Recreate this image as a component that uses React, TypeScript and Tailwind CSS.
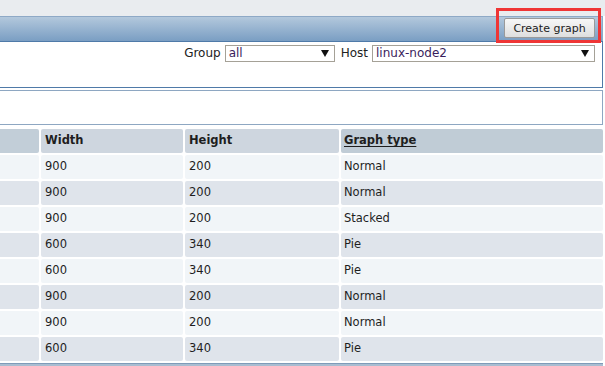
const rows = [
  { width: "900", height: "200", type: "Normal" },
  { width: "900", height: "200", type: "Normal" },
  { width: "900", height: "200", type: "Stacked" },
  { width: "600", height: "340", type: "Pie" },
  { width: "600", height: "340", type: "Pie" },
  { width: "900", height: "200", type: "Normal" },
  { width: "900", height: "200", type: "Normal" },
  { width: "600", height: "340", type: "Pie" },
];

function Select({ value, className }: { value: string; className: string }) {
  return (
    <div
      className={`h-[17px] border border-[#a5a197] bg-white flex items-center justify-between pl-[3px] pr-[5px] ${className}`}
    >
      <span className="text-[#3a1d5c] leading-none">{value}</span>
      <svg width="8" height="7" viewBox="0 0 8 7">
        <path d="M0 0h8L4 7z" fill="#111" />
      </svg>
    </div>
  );
}

export default function App() {
  return (
    <div
      className="w-[605px] h-[366px] bg-white overflow-hidden relative text-[11px] text-[#222]"
      style={{ fontFamily: '"DejaVu Sans", Verdana, sans-serif' }}
    >
      {/* top strip */}
      <div className="h-[16px] bg-[#e9ecef]" />

      {/* header bar */}
      <div className="h-[25px] mr-[2px] border-t border-r border-[#8ea9c6] bg-gradient-to-b from-[#b3c8dc] to-[#7a9ec3] flex items-start justify-end pr-[7px] pt-[1px]">
        <button className="h-[20px] w-[91px] rounded-[2px] border border-[#9a9a9a] bg-gradient-to-b from-[#f7f7f7] to-[#dedede] text-[#1c1c1c] leading-none">
          Create graph
        </button>
      </div>

      {/* filter */}
      <div className="h-[47px] mr-[2px] border border-l-0 border-[#4f7aa8] bg-white flex justify-end items-start pt-[2px] pr-[7px] text-[12px]">
        <div className="flex items-center gap-[4px]">
          <span>Group</span>
          <Select value="all" className="w-[110px]" />
          <span className="ml-[2px]">Host</span>
          <Select value="linux-node2" className="w-[223px]" />
        </div>
      </div>

      <div className="h-[35px] mt-[2px] mr-[2px] border border-l-0 border-[#8ea7c2] bg-white" />

      {/* table */}
      <div className="mt-[4px] grid grid-cols-[39px_142px_154px_262px] gap-[2px] auto-rows-[24px] text-[11.5px] text-[#1e1e1e]">
        <div className="rounded-r-[2px] bg-[#c2ced8]" />
        <div className="rounded-[2px] bg-[#ced6df] font-bold flex items-center pl-[4px]">Width</div>
        <div className="rounded-[2px] bg-[#ced6df] font-bold flex items-center pl-[4px]">Height</div>
        <div className="rounded-[2px] bg-[#c0ccd6] font-bold flex items-center pl-[3px]">
          <span className="underline underline-offset-2">Graph type</span>
        </div>
        {rows.map((r, i) => {
          const bg = i % 2 === 0 ? "bg-[#f1f5f8]" : "bg-[#dfe4eb]";
          return [
            <div key={`a${i}`} className={`rounded-r-[2px] ${bg}`} />,
            <div key={`b${i}`} className={`rounded-[2px] ${bg} flex items-center pl-[4px]`}>{r.width}</div>,
            <div key={`c${i}`} className={`rounded-[2px] ${bg} flex items-center pl-[4px]`}>{r.height}</div>,
            <div key={`d${i}`} className={`rounded-[2px] ${bg} flex items-center pl-[3px]`}>{r.type}</div>,
          ];
        })}
      </div>

      <div className="mt-[2px] h-[6px] mr-[2px] border-t border-[#7f9bb9] bg-[#a9bdd1]" />

      {/* annotation */}
      <div className="absolute left-[496px] top-[8px] w-[105px] h-[35px] border-[3px] border-[#ef3535]" />
    </div>
  );
}
